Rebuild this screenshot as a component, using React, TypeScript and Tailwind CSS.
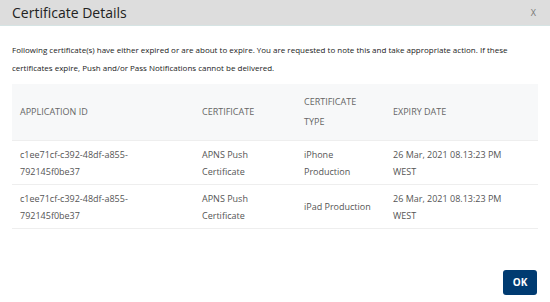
const rows = [
  {
    id: ["c1ee71cf-c392-48df-a855-", "792145f0be37"],
    cert: ["APNS Push", "Certificate"],
    type: ["iPhone", "Production"],
    date: ["26 Mar, 2021 08.13:23 PM", "WEST"],
  },
  {
    id: ["c1ee71cf-c392-48df-a855-", "792145f0be37"],
    cert: ["APNS Push", "Certificate"],
    type: ["iPad Production"],
    date: ["26 Mar, 2021 08.13:23 PM", "WEST"],
  },
];

function Lines({ items }: { items: string[] }) {
  return (
    <>
      {items.map((t, i) => (
        <div key={i}>{t}</div>
      ))}
    </>
  );
}

export default function App() {
  return (
    <div
      className="flex h-[302px] w-[550px] flex-col overflow-hidden bg-white text-[#333]"
      style={{ fontFamily: '"Open Sans", "Noto Sans", sans-serif' }}
    >
      <div className="flex h-[26px] shrink-0 items-center justify-between border-b border-[#d6e4e4] bg-[#dddddd] pl-3 pr-[14px]">
        <span className="text-[14px] text-[#222]">Certificate Details</span>
        <span className="text-[9px] text-[#777]">X</span>
      </div>

      <div className="px-3 pt-[15px] text-[8px] leading-[18px] text-[#222]">
        Following certificate(s) have either expired or are about to expire. You are requested to note this and take
        appropriate action. If these certificates expire, Push and/or Pass Notifications cannot be delivered.
      </div>

      <div className="mx-3 mt-[7px] text-[9px] text-[#555]">
        <div className="grid h-[57px] grid-cols-[182px_102px_89px_151px] items-center border-b border-[#eeeeee] bg-[#f7f8f9] leading-[20px] text-[#666]">
          <div className="pl-2">APPLICATION ID</div>
          <div className="pl-2">CERTIFICATE</div>
          <div className="pl-2">
            CERTIFICATE
            <br />
            TYPE
          </div>
          <div className="pl-2">EXPIRY DATE</div>
        </div>
        {rows.map((r, i) => (
          <div
            key={i}
            className="grid h-[44px] grid-cols-[182px_102px_89px_151px] items-center border-b border-[#eeeeee] leading-[17px]"
          >
            <div className="pl-2">
              <Lines items={r.id} />
            </div>
            <div className="pl-2">
              <Lines items={r.cert} />
            </div>
            <div className="pl-2">
              <Lines items={r.type} />
            </div>
            <div className="pl-2">
              <Lines items={r.date} />
            </div>
          </div>
        ))}
      </div>

      <div className="flex flex-1 items-start justify-end pr-[13px] pt-[41px]">
        <button className="h-[25px] w-[34px] rounded-[3px] bg-[#003b71] text-[10px] font-bold text-white">OK</button>
      </div>
    </div>
  );
}
